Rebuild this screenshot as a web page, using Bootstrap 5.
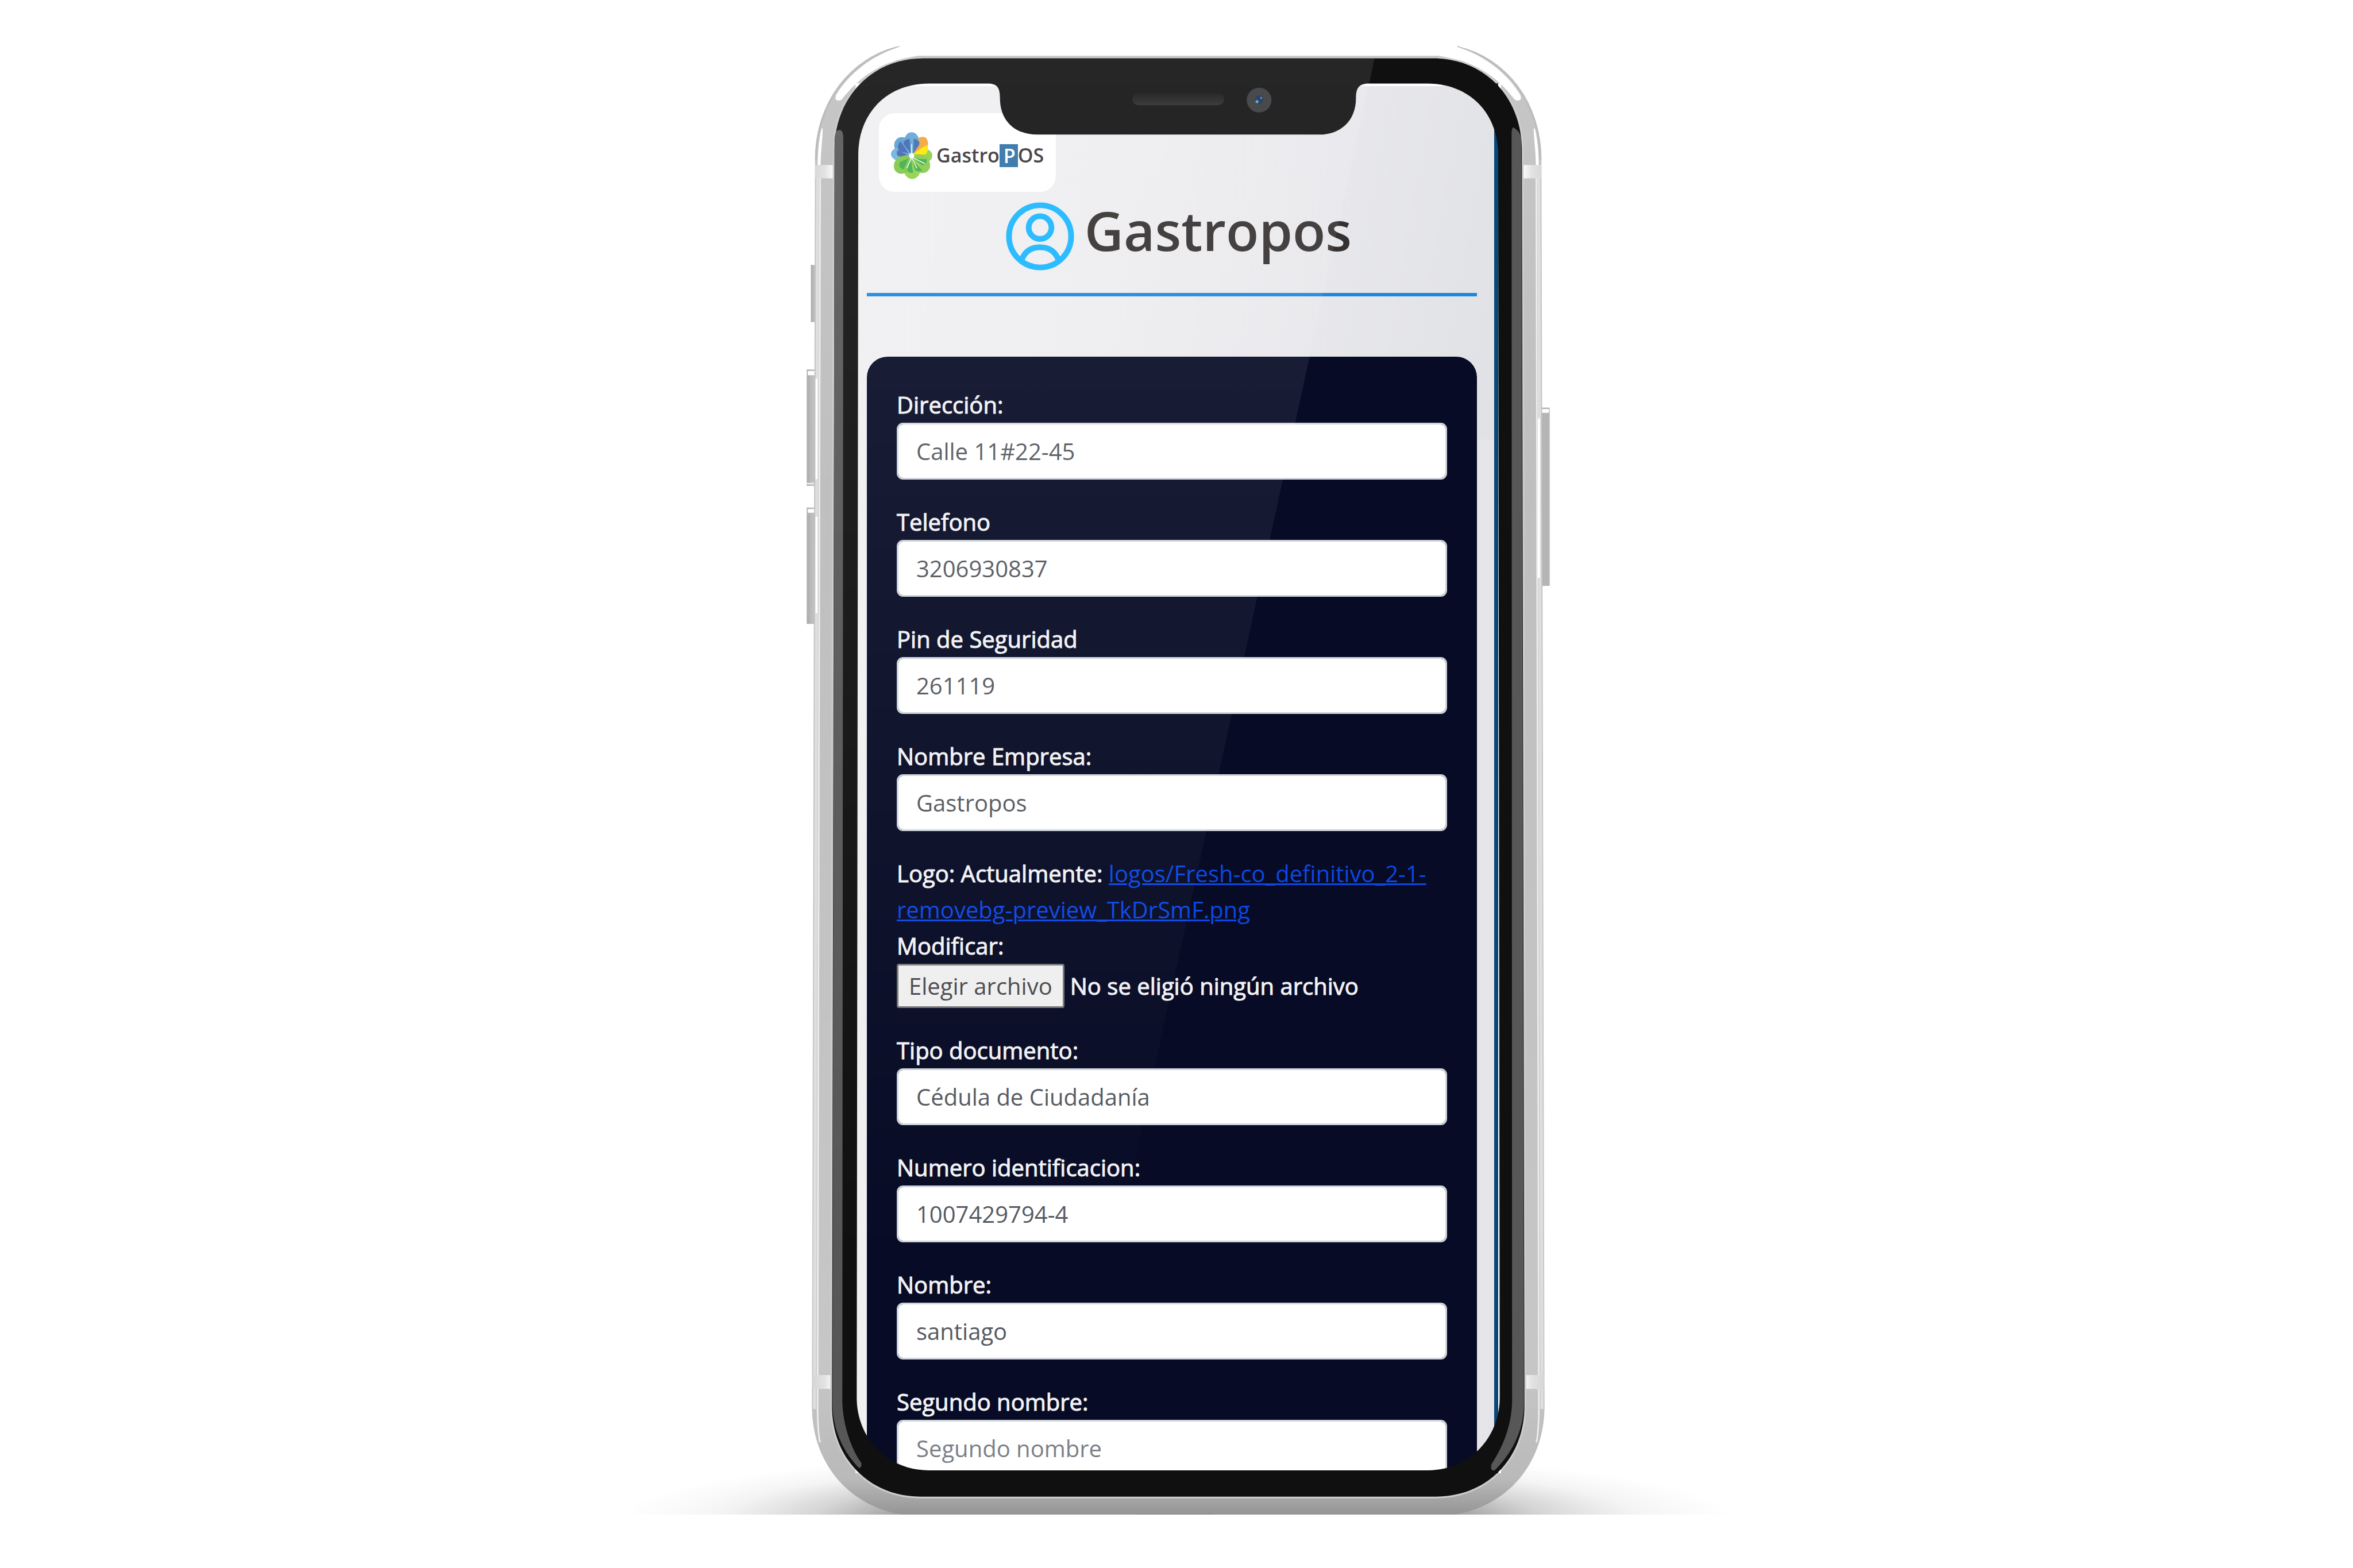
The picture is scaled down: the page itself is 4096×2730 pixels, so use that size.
<!DOCTYPE html>
<html lang="es">
<head>
<meta charset="utf-8">
<meta name="viewport" content="width=device-width, initial-scale=1">
<title>Gastropos</title>
<link rel="stylesheet" href="https://cdn.jsdelivr.net/npm/bootstrap@5.3.0/dist/css/bootstrap.min.css">
<style>
  body { background: #fff; font-family: "Open Sans", "Noto Sans", sans-serif; font-size: 40px; line-height: 63px; }
  .stage { padding: 72px 0 72px 6px; }
  .device { width: 1948px; max-width: 100%; padding-top: 73px; }
  .device-frame { inset: 0 0 auto 0; width: 100%; pointer-events: none; z-index: 2; }
  .device-back { inset: 0 0 auto 0; width: 100%; z-index: 0; }
  .screen {
    width: 1124px; max-width: 100%; height: 2420px; z-index: 1;
    padding: 52px 42px 0 20px;
    background: linear-gradient(100deg, #f0f0f3 0%, #eeeef0 40%, #e9e9ed 65%, #e0e1e5 100%) 0 0 / 100% 620px no-repeat, linear-gradient(90deg, #f0f0f3, #e4e4e9);
    box-shadow: inset -5px 0 #fff, inset -12px 0 #07477a, inset 0 5px #fff;
  }
  .brand { width: 308px; height: 137px; margin-left: 21px; border-radius: 27px; background: #fff; color: #3a3638; font-size: 34px; font-weight: 600; padding: 10px 0 0 19px; text-decoration: none; }
  .brand-mark { width: 74px; height: 82px; margin-right: 7px; }
  .brand-p { background: #2f72a6; color: #fff; line-height: 40px; padding: 0 4px 0 7px; }
  .page-title { font-size: 94px; line-height: 99px; font-weight: 600; color: #353131; margin: 0; padding-bottom: 20px; }
  .heading { gap: 18px; margin-top: 18px; padding-left: 24px; }
  .user-icon { width: 119px; height: 119px; }
  .rule { height: 6px; margin: 39px 0 105px; background: #1d87dc; opacity: 1; border: 0; }
  .panel { background: #070b25; border-radius: 36px; padding: 52px; color: #f2f2f4; }
  .field { margin-bottom: 42px; }
  .field label, .panel p, .file-row { -webkit-text-stroke: 1px currentColor; }
  .field label, .panel p { display: block; margin: 0; }
  .field .form-control { height: 99px; border: 3px solid #ced4da; border-radius: 11px; padding: 0 31px; font-size: 40px; line-height: 63px; color: #55595f; background-color: #fff; }
  .field .form-control::placeholder { color: #7b8087; opacity: 1; }
  .panel a { color: #0c47e2; text-decoration-thickness: 3px; -webkit-text-stroke: 0; }
  .file-row { gap: 10px; height: 77px; }
  .field .file-btn { height: 77px; padding: 0 18px; border: 3px solid #77777a; border-radius: 4px; background: #efefef; color: #4a4a4d; line-height: 71px; -webkit-text-stroke: 0; }
</style>
<script src="https://cdn.jsdelivr.net/npm/bootstrap@5.3.0/dist/js/bootstrap.bundle.min.js"></script>
</head>
<body>
<main class="stage d-flex justify-content-center overflow-hidden">
  <div class="device position-relative flex-shrink-0">

    <!-- floor shadow, side buttons and metal body -->
    <svg class="device-back position-absolute" viewBox="1200 80 2172 2880" aria-hidden="true">
      <defs>
        <radialGradient id="floor" gradientUnits="userSpaceOnUse" cx="0" cy="0" r="1" gradientTransform="translate(2286 2948) scale(1085 135)">
          <stop offset="0" stop-color="#555"/><stop offset=".5" stop-color="#888" stop-opacity=".8"/>
          <stop offset=".65" stop-color="#999" stop-opacity=".42"/><stop offset=".82" stop-color="#aaa" stop-opacity=".13"/><stop offset="1" stop-color="#bbb" stop-opacity="0"/>
        </radialGradient>
        <linearGradient id="floorEdge" x1="0" y1="0" x2="0" y2="1">
          <stop offset="0" stop-color="#777" stop-opacity=".9"/><stop offset="1" stop-color="#bbb" stop-opacity="0"/>
        </linearGradient>
        <linearGradient id="metal" gradientUnits="userSpaceOnUse" x1="0" y1="90" x2="0" y2="2943">
          <stop offset="0" stop-color="#c6c6c6"/><stop offset=".3" stop-color="#bfbfbf"/><stop offset=".9" stop-color="#c6c6c6"/>
          <stop offset=".975" stop-color="#b9b9b9"/><stop offset="1" stop-color="#939393"/>
        </linearGradient>
        <linearGradient id="key" x1="0" y1="0" x2="1" y2="0">
          <stop offset="0" stop-color="#aaa"/><stop offset=".4" stop-color="#bcbcbc"/><stop offset="1" stop-color="#c6c6c6"/>
        </linearGradient>
        <linearGradient id="band" x1="0" y1="0" x2="1" y2="0">
          <stop offset="0" stop-color="#d6d6d6"/><stop offset=".55" stop-color="#e2e2e2"/><stop offset="1" stop-color="#fff"/>
        </linearGradient>
        <g id="side">
          <path d="M1745 91C1650 112 1583 200 1583 310" fill="none" stroke="#bdbdbd" stroke-width="4"/>
          <path d="M1741 92C1690 108 1645 145 1622 184Q1617 198 1632 194C1656 165 1690 122 1782 108L2286 108V84H1760Z" fill="#fff"/>
          <path d="M1594 248C1588 270 1586 300 1586 330L1592 330C1591 300 1596 270 1596 250Z" fill="#fff"/>
          <path d="M1586 330L1580 2735" stroke="#dedede" stroke-width="6"/>
          <path d="M1591 330L1586 2735C1586 2760 1588 2790 1591 2800" stroke="#eeeeee" stroke-width="3" fill="none"/>
          <path d="M1581 320H1619V346H1581Z M1576 2669H1615V2696H1576Z" fill="url(#band)"/>
        </g>
      </defs>
      <path d="M1200 2948V2800H3372V2948Z" fill="url(#floor)"/>
      <path d="M1500 2946C1700 2943 2870 2943 3070 2946L2990 2958H1580Z" fill="url(#floorEdge)"/>
      <rect x="1573" y="514" width="14" height="111" fill="url(#key)"/>
      <rect x="1565" y="717" width="22" height="226" fill="url(#key)"/>
      <rect x="1565" y="985" width="22" height="226" fill="url(#key)"/>
      <rect x="2985" y="791" width="22" height="346" fill="#b5b5b5"/>
      <path d="M1567 720H1586V728H1567Z M1567 988H1586V995H1567Z M2989 794H3006L3005 801H2987Z" fill="#fff"/>
      <path d="M1565 937H1580V940H1565Z" fill="#eee"/>
      <path d="M1745 90C1648 112 1581 200 1581 310L1575 2733C1577 2855 1665 2943 1790 2943H2782C2907 2943 2995 2855 2997 2733L2991 310C2991 200 2924 112 2827 90Z" fill="url(#metal)"/>
      <path d="M2203 2939H2353L2365 2943H2190Z" fill="#858585"/>
      <use href="#side"/>
      <use href="#side" transform="translate(4572 0) scale(-1 1)"/>
      <path d="M1584 735V930M1584 1003V1190" stroke="#fff" stroke-width="4"/>
      <path d="M2986 812V1122" stroke="#fff" stroke-width="4"/>
      <path d="M1792 113C1690 113 1619 190 1619 290L1614 2733C1616 2835 1690 2905 1785 2905H2787C2882 2905 2956 2835 2958 2733L2953 290C2953 190 2882 113 2780 113Z" fill="#101010" stroke="#cdcdcd" stroke-width="7"/>
    </svg>

    <div class="screen position-relative mx-auto overflow-hidden">
      <a class="brand d-flex align-items-center" href="#">
        <svg class="brand-mark" viewBox="0 0 80 88" aria-hidden="true">
          <g transform="translate(41 44)">
            <ellipse rx="15" ry="20" cy="-24" fill="#62a5d8"/>
            <ellipse rx="16" ry="19" cy="-23" transform="rotate(-42)" fill="#5b9fd4"/>
            <ellipse rx="13" ry="19" cy="-20" transform="rotate(-84)" fill="#6fb0e0"/>
            <ellipse rx="14" ry="19" cy="-20" transform="rotate(90)" fill="#8fce4d"/>
            <ellipse rx="16" ry="19" cy="-23" transform="rotate(132)" fill="#87c94c"/>
            <ellipse rx="16" ry="20" cy="-24" transform="rotate(178)" fill="#92d04b"/>
            <ellipse rx="16" ry="19" cy="-23" transform="rotate(224)" fill="#7dc648"/>
            <path d="M3 -5L14 -34Q30 -40 31 -22L29 -6Z" fill="#f2a33a"/>
            <path d="M3 -3Q16 -14 30 -20Q32 -4 24 -2Z" fill="#fde900"/>
            <path d="M3 -4L4 -32Q17 -30 14 -20Z" fill="#3c6fb5"/>
            <path d="M-2 -4L-4 -32Q-16 -30 -15 -22Z M-5 -4L-21 -27Q-30 -16 -23 -8Z M-7 -2L-27 -10Q-30 0 -22 2Z" fill="#4168b0"/>
            <path d="M2 5L28 7Q30 16 20 18Z M1 7L20 28Q10 32 6 26Z M-2 7L3 32Q-7 34 -9 24Z M-6 5L-15 26Q-27 22 -22 12Z" fill="#3fae49"/>
            <path d="M0 0V-22M0 3L10 24M0 3L-9 24M0 3L25 15" stroke="#d9f0dc" stroke-width="2"/>
            <circle r="5" fill="#fff"/>
          </g>
        </svg>
        <span>Gastro</span><span class="brand-p">P</span><span>OS</span>
      </a>

      <header class="heading d-flex justify-content-center align-items-center">
        <svg class="user-icon" viewBox="0 0 132 132" fill="none" stroke="#1ab6ff" stroke-width="11" aria-hidden="true">
          <circle cx="66" cy="66" r="60"/>
          <circle cx="66" cy="49" r="22"/>
          <path d="M30 113C36 95 49 87 66 87S96 95 102 113"/>
        </svg>
        <h1 class="page-title">Gastropos</h1>
      </header>
      <hr class="rule">

      <form class="panel">
        <div class="field"><label for="direccion">Dirección:</label><input class="form-control" id="direccion" type="text" value="Calle 11#22-45"></div>
        <div class="field"><label for="telefono">Telefono</label><input class="form-control" id="telefono" type="text" value="3206930837"></div>
        <div class="field"><label for="pin">Pin de Seguridad</label><input class="form-control" id="pin" type="text" value="261119"></div>
        <div class="field"><label for="empresa">Nombre Empresa:</label><input class="form-control" id="empresa" type="text" value="Gastropos"></div>
        <div class="field">
          <p>Logo: Actualmente: <a href="#">logos/Fresh-co_definitivo_2-1-removebg-preview_TkDrSmF.png</a></p>
          <p>Modificar:</p>
          <div class="file-row d-flex align-items-center">
            <input class="visually-hidden" id="logo" type="file">
            <label class="file-btn" for="logo">Elegir archivo</label><span>No se eligió ningún archivo</span>
          </div>
        </div>
        <div class="field"><label for="tipo">Tipo documento:</label><select class="form-control" id="tipo"><option>Cédula de Ciudadanía</option></select></div>
        <div class="field"><label for="numero">Numero identificacion:</label><input class="form-control" id="numero" type="text" value="1007429794-4"></div>
        <div class="field"><label for="nombre">Nombre:</label><input class="form-control" id="nombre" type="text" value="santiago"></div>
        <div class="field"><label for="segundo">Segundo nombre:</label><input class="form-control" id="segundo" type="text" placeholder="Segundo nombre"></div>
      </form>
    </div>

    <!-- bezel with notch, edge reflections and glass glare -->
    <svg class="device-frame position-absolute" viewBox="1200 80 2172 2880" aria-hidden="true">
      <defs>
        <clipPath id="glass"><path d="M1792 113C1690 113 1619 190 1619 290L1614 2733C1616 2835 1690 2905 1785 2905H2787C2882 2905 2956 2835 2958 2733L2953 290C2953 190 2882 113 2780 113Z"/></clipPath>
        <linearGradient id="glare" gradientUnits="userSpaceOnUse" x1="0" y1="113" x2="0" y2="2450">
          <stop offset="0" stop-color="#fff" stop-opacity=".092"/><stop offset=".25" stop-color="#fff" stop-opacity=".07"/><stop offset="1" stop-color="#fff" stop-opacity="0"/>
        </linearGradient>
        <linearGradient id="ear" x1="0" y1="0" x2="0" y2="1"><stop offset="0" stop-color="#131313"/><stop offset="1" stop-color="#2a2a2a"/></linearGradient>
      </defs>
      <path fill="#101010" fill-rule="evenodd" d="M1792 113C1690 113 1619 190 1619 290L1614 2733C1616 2835 1690 2905 1785 2905H2787C2882 2905 2956 2835 2958 2733L2953 290C2953 190 2882 113 2780 113Z
        M1802 162C1720 162 1665 220 1665 300L1662 2713C1662 2790 1720 2854 1802 2854H2770C2852 2854 2910 2790 2910 2713L2907 300C2907 220 2852 162 2770 162H2655C2636 162 2631 172 2631 190C2631 235 2600 261 2560 261H2012C1970 261 1940 235 1940 190C1940 172 1936 162 1917 162Z"/>
      <rect x="2197" y="180" width="178" height="24" rx="12" fill="url(#ear)"/>
      <circle cx="2443" cy="194" r="24" fill="#36383b"/>
      <circle cx="2443" cy="193" r="8" fill="#1c2f52"/>
      <circle cx="2447" cy="190" r="2" fill="#4d87b8"/><circle cx="2439" cy="197" r="3" fill="#4d9dc8"/>
      <path d="M1619 270Q1620 252 1628 252Q1636 252 1636 268L1634 2720C1635 2765 1651 2812 1671 2840Q1672 2850 1666 2849C1637 2820 1615 2775 1615 2725Z" fill="#575757"/>
      <path d="M2952 270C2950 256 2942 250 2936 247Q2933 248 2933 262L2934 2720C2933 2770 2915 2810 2894 2842Q2891 2856 2900 2854C2935 2820 2957 2775 2957 2725Z" fill="#575757"/>
      <path d="M1500 100H2670L2158 2450H1500Z" fill="url(#glare)" clip-path="url(#glass)"/>
    </svg>
  </div>
</main>
</body>
</html>
